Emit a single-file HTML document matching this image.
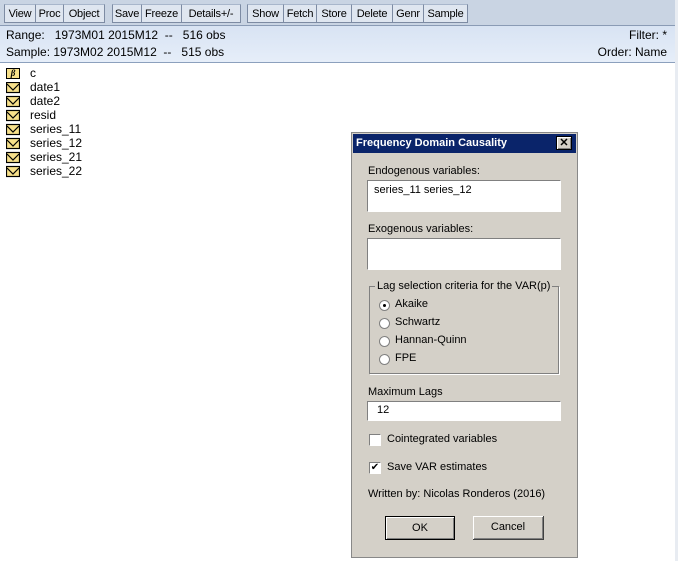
<html><head><style>
body{margin:0;width:678px;height:561px;background:#fff;position:relative;overflow:hidden;font-family:"Liberation Sans",Arial,sans-serif;}
.a{position:absolute}
.tb{left:0;top:0;width:675px;height:25px;background:#c9d4e3;border-bottom:1px solid #8a9bb5}
.btn{position:absolute;top:4px;height:19px;border:1px solid #7d8ba3;border-top-color:#a8b6cb;background:#dfe6f0;font-size:11px;line-height:19px;text-align:center;box-sizing:border-box;color:#000;letter-spacing:-0.2px}
.info{left:0;top:26px;width:675px;height:36px;background:linear-gradient(#d8e3f3,#e6eef9);border-bottom:1px solid #8ca0bd;font-size:12px}
.it{position:absolute;font-size:12px;left:30px}
.ic{position:absolute;left:6px;width:14px;height:11px;background:#f7e08a;border:1px solid #000;box-sizing:border-box}
.dlg{left:351px;top:132px;width:227px;height:426px;background:#d4d0c8;border:1px solid #888;box-sizing:border-box;font-size:11px;color:#000}
.dlg .a{font-size:11px}
.box{background:#fff;border-top:1px solid #808080;border-left:1px solid #808080;border-bottom:1px solid #fff;border-right:1px solid #fff;box-sizing:border-box}
.rd{width:11px;height:11px;border-radius:50%;background:#fff;border:1px solid #808080;box-sizing:border-box}
.pb{background:#d4d0c8;border:1px solid #000;box-shadow:inset 1px 1px #fff,inset -1px -1px #808080;box-sizing:border-box;text-align:center;line-height:22px;font-size:11px}
</style></head><body>
<div class="a tb">
<div class="btn" style="left:4px;width:32px">View</div>
<div class="btn" style="left:35px;width:29px">Proc</div>
<div class="btn" style="left:63px;width:42px">Object</div>
<div class="btn" style="left:112px;width:30px">Save</div>
<div class="btn" style="left:141px;width:41px">Freeze</div>
<div class="btn" style="left:181px;width:60px">Details+/-</div>
<div class="btn" style="left:247px;width:37px">Show</div>
<div class="btn" style="left:283px;width:34px">Fetch</div>
<div class="btn" style="left:316px;width:36px">Store</div>
<div class="btn" style="left:351px;width:42px">Delete</div>
<div class="btn" style="left:392px;width:32px">Genr</div>
<div class="btn" style="left:423px;width:45px">Sample</div>
</div>
<div class="a" style="left:675px;top:0;width:3px;height:561px;background:#e8ecf2"></div>
<div class="a info">
<div class="a" style="left:6px;top:2px">Range:&nbsp;&nbsp; 1973M01 2015M12&nbsp;&nbsp;--&nbsp;&nbsp;&nbsp;516 obs</div>
<div class="a" style="left:6px;top:19px">Sample: 1973M02 2015M12&nbsp;&nbsp;--&nbsp;&nbsp;&nbsp;515 obs</div>
<div class="a" style="right:8px;top:2px">Filter: *</div>
<div class="a" style="right:8px;top:19px">Order: Name</div>
</div>
<div class="ic" style="top:68px;font:bold italic 9px 'Liberation Serif';text-align:center;line-height:9px">β</div><div class="it" style="top:66px">c</div>
<svg class="a" style="left:6px;top:82px" width="14" height="98">
<g fill="#f7e08a" stroke="#000" stroke-width="1.2">
<rect x=".5" y=".5" width="13" height="10"/><rect x=".5" y="14.5" width="13" height="10"/><rect x=".5" y="28.5" width="13" height="10"/><rect x=".5" y="42.5" width="13" height="10"/><rect x=".5" y="56.5" width="13" height="10"/><rect x=".5" y="70.5" width="13" height="10"/><rect x=".5" y="84.5" width="13" height="10"/></g>
<g fill="none" stroke="#000" stroke-width="1.2"><path d="M1 2l6 6 6-6M1 16l6 6 6-6M1 30l6 6 6-6M1 44l6 6 6-6M1 58l6 6 6-6M1 72l6 6 6-6M1 86l6 6 6-6"/></g></svg>
<div class="it" style="top:80px">date1</div>
<div class="it" style="top:94px">date2</div>
<div class="it" style="top:108px">resid</div>
<div class="it" style="top:122px">series_11</div>
<div class="it" style="top:136px">series_12</div>
<div class="it" style="top:150px">series_21</div>
<div class="it" style="top:164px">series_22</div>

<div class="a dlg">
<div class="a" style="left:1px;top:1px;width:223px;height:19px;background:#0a246a;color:#fff;font-weight:bold;font-size:11px;line-height:19px;padding-left:3px;box-sizing:border-box">Frequency Domain Causality</div>
<div class="a pb" style="left:204px;top:3px;width:16px;height:14px;line-height:12px;font-weight:bold;font-size:11px">✕</div>
<div class="a" style="left:16px;top:32px">Endogenous variables:</div>
<div class="a box" style="left:15px;top:47px;width:194px;height:32px;padding:3px 6px">series_11 series_12</div>
<div class="a" style="left:16px;top:90px">Exogenous variables:</div>
<div class="a box" style="left:15px;top:105px;width:194px;height:32px"></div>
<div class="a" style="left:17px;top:153px;width:190px;height:88px;border:1px solid #808080;box-shadow:1px 1px #fff;box-sizing:border-box"></div>
<div class="a" style="left:23px;top:147px;background:#d4d0c8;padding:0 2px">Lag selection criteria for the VAR(p)</div>
<div class="a rd" style="left:27px;top:167px"><div style="width:3px;height:3px;background:#000;border-radius:50%;margin:3px"></div></div><div class="a" style="left:43px;top:165px">Akaike</div>
<div class="a rd" style="left:27px;top:185px"></div><div class="a" style="left:43px;top:183px">Schwartz</div>
<div class="a rd" style="left:27px;top:203px"></div><div class="a" style="left:43px;top:201px">Hannan-Quinn</div>
<div class="a rd" style="left:27px;top:221px"></div><div class="a" style="left:43px;top:219px">FPE</div>
<div class="a" style="left:16px;top:253px">Maximum Lags</div>
<div class="a box" style="left:15px;top:268px;width:194px;height:20px;padding:2px 9px">12</div>
<div class="a box" style="left:17px;top:301px;width:12px;height:12px;background:#fff"></div>
<div class="a" style="left:35px;top:300px">Cointegrated variables</div>
<div class="a box" style="left:17px;top:329px;width:12px;height:12px;font-size:10px;line-height:9px;text-align:center">✔</div>
<div class="a" style="left:35px;top:328px">Save VAR estimates</div>
<div class="a" style="left:16px;top:355px">Written by: Nicolas Ronderos (2016)</div>
<div class="a pb" style="left:33px;top:383px;width:70px;height:24px">OK</div>
<div class="a pb" style="left:121px;top:383px;width:71px;height:24px;border-color:#404040;border-width:0 1px 1px 0;box-shadow:inset 1px 1px #fff,inset -1px -1px #808080">Cancel</div>
</div>
</body></html>
